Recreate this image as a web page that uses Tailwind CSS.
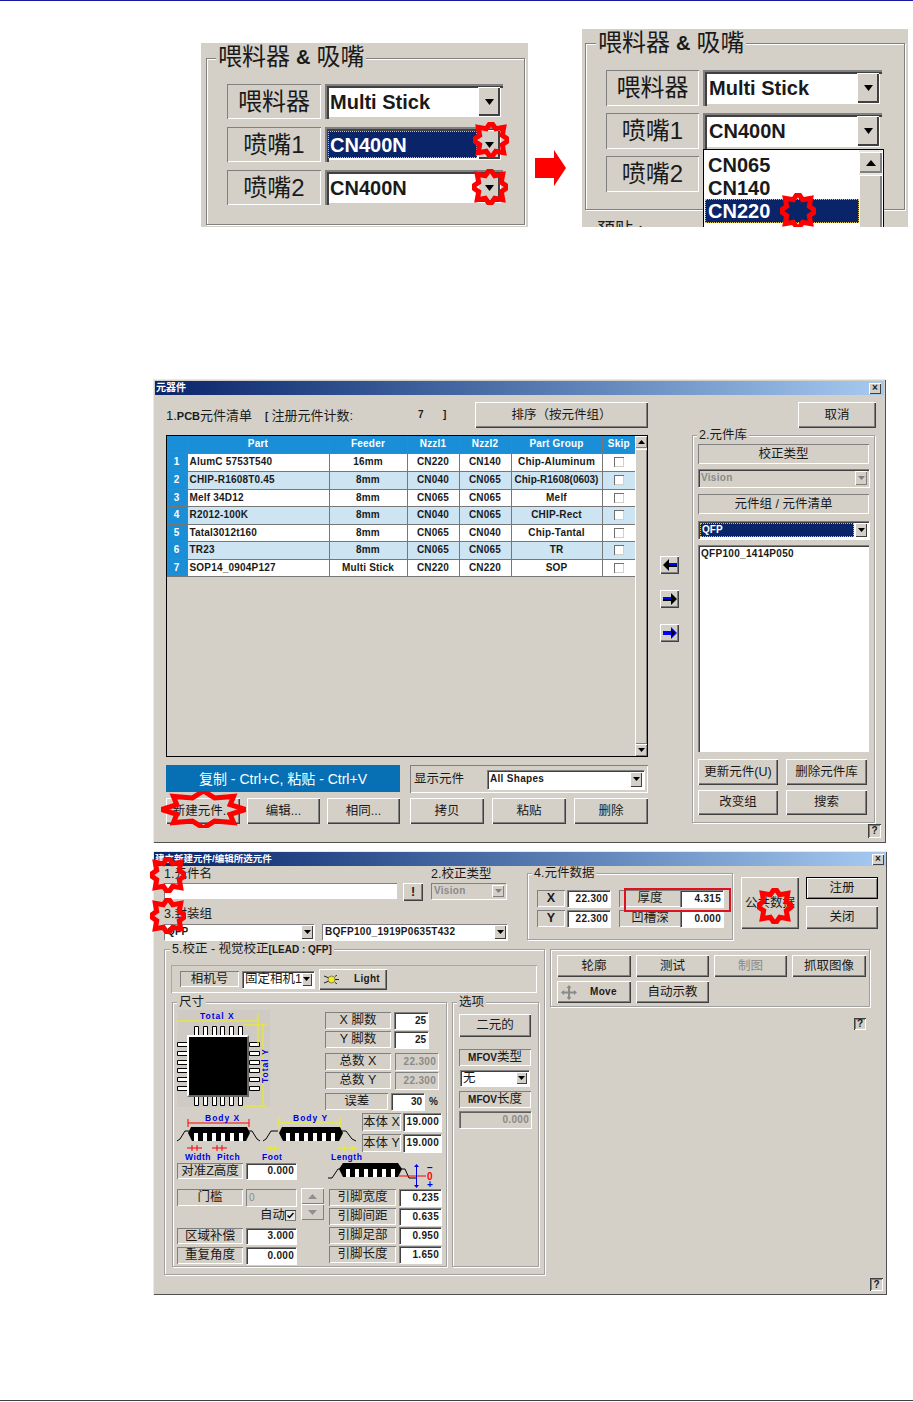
<!DOCTYPE html>
<html lang="zh">
<head>
<meta charset="UTF-8">
<title>元器件</title>
<script src="https://cdn.jsdelivr.net/npm/@tailwindcss/browser@4"></script>
</head>
<body class="bg-white w-[913px] h-[1402px] overflow-hidden text-[#1a1a1a] text-[12.5px] leading-none font-['Liberation_Sans','Noto_Sans_CJK_SC',sans-serif]">

<svg class="hidden"><defs><polygon id="star" points="100,50 81.4,63 85.4,85.4 63,81.4 50,100 37,81.4 14.6,85.4 18.6,63 0,50 18.6,37 14.6,14.6 37,18.6 50,0 63,18.6 85.4,14.6 81.4,37" fill="none" stroke="#f00" stroke-width="5" vector-effect="non-scaling-stroke"/></defs></svg>

<div class="h-px bg-[#1a1aa0]"></div>

<!-- Top: combo before / after -->
<div class="h-[226px] flex items-end pl-[201px]">
  <div class="relative w-[327px] h-[184px] bg-[#d4d0c8] overflow-hidden text-[24px]">
    <div class="absolute left-[5px] top-[15px] w-[319px] h-[167px] border border-[#808080] shadow-[1px_1px_0_#fff,inset_1px_1px_0_#fff]"></div>
    <div class="relative ml-[15px] w-fit px-[2px] bg-[#d4d0c8] h-[28px] flex items-center">喂料器 <span class="mx-[6px] font-bold text-[20px]">&amp;</span> 吸嘴</div>
    <div class="relative mt-[13px] ml-[26px] flex flex-col gap-[8px]">
      <div class="flex gap-[4px]">
        <div class="w-[94px] h-[35px] flex items-center justify-center shadow-[inset_1px_1px_0_#808080,inset_-1px_-1px_0_#fff]">喂料器</div>
        <div class="w-[178px] h-[35px] flex items-center bg-white shadow-[inset_2px_2px_0_#808080,inset_4px_4px_0_#404040,inset_-2px_-2px_0_#d4d0c8]">
          <span class="ml-[5px] font-bold text-[20px] font-['Liberation_Sans',sans-serif]">Multi Stick</span>
          <div class="ml-auto mr-[3px] w-[22px] h-[29px] flex items-center justify-center bg-[#d4d0c8] shadow-[inset_1px_1px_0_#fff,inset_-2px_-2px_0_#404040]"><svg class="w-[9px] h-[6px]" viewBox="0 0 9 6"><path d="M0 0h9L4.500 6z"/></svg></div>
        </div>
      </div>
      <div class="flex gap-[4px]">
        <div class="w-[94px] h-[35px] flex items-center justify-center shadow-[inset_1px_1px_0_#808080,inset_-1px_-1px_0_#fff]">喷嘴1</div>
        <div class="w-[178px] h-[35px] flex items-center bg-white shadow-[inset_2px_2px_0_#808080,inset_4px_4px_0_#404040,inset_-2px_-2px_0_#d4d0c8]">
          <span class="ml-[3px] w-[149px] h-[27px] flex items-center pl-px bg-[#0a246a] border border-dotted border-[#d8c060] text-white font-bold text-[20px] font-['Liberation_Sans',sans-serif]">CN400N</span>
          <div class="ml-auto mr-[3px] w-[22px] h-[29px] flex items-center justify-center bg-[#d4d0c8] shadow-[inset_1px_1px_0_#fff,inset_-2px_-2px_0_#404040]"><svg class="w-[9px] h-[6px]" viewBox="0 0 9 6"><path d="M0 0h9L4.500 6z"/></svg></div>
        </div>
      </div>
      <div class="flex gap-[4px]">
        <div class="w-[94px] h-[35px] flex items-center justify-center shadow-[inset_1px_1px_0_#808080,inset_-1px_-1px_0_#fff]">喷嘴2</div>
        <div class="w-[178px] h-[35px] flex items-center bg-white shadow-[inset_2px_2px_0_#808080,inset_4px_4px_0_#404040,inset_-2px_-2px_0_#d4d0c8]">
          <span class="ml-[5px] font-bold text-[20px] font-['Liberation_Sans',sans-serif]">CN400N</span>
          <div class="ml-auto mr-[3px] w-[22px] h-[29px] flex items-center justify-center bg-[#d4d0c8] shadow-[inset_1px_1px_0_#fff,inset_-2px_-2px_0_#404040]"><svg class="w-[9px] h-[6px]" viewBox="0 0 9 6"><path d="M0 0h9L4.500 6z"/></svg></div>
        </div>
      </div>
    </div>
    <svg class="absolute left-[272px] top-[79px] w-[36px] h-[36px]" viewBox="0 0 100 100"><use href="#star"/></svg>
    <svg class="absolute left-[271px] top-[126px] w-[36px] h-[36px]" viewBox="0 0 100 100"><use href="#star"/></svg>
  </div>

  <svg class="ml-[7px] mb-[41px] w-[31px] h-[36px]" viewBox="0 0 31 36"><path d="M0 8H19V0L31 18 19 36V28H0z" fill="#f00"/></svg>

  <div class="relative ml-[16px] w-[326px] h-[198px] bg-[#d4d0c8] overflow-hidden text-[24px]">
    <div class="absolute left-[3px] top-[14px] w-[320px] h-[167px] border border-[#808080] shadow-[1px_1px_0_#fff,inset_1px_1px_0_#fff]"></div>
    <div class="relative ml-[14px] w-fit px-[2px] bg-[#d4d0c8] h-[27px] flex items-center">喂料器 <span class="mx-[6px] font-bold text-[20px]">&amp;</span> 吸嘴</div>
    <div class="relative mt-[14px] ml-[24px] flex flex-col gap-[7px]">
      <div class="flex gap-[4px]">
        <div class="w-[93px] h-[36px] flex items-center justify-center shadow-[inset_1px_1px_0_#808080,inset_-1px_-1px_0_#fff]">喂料器</div>
        <div class="w-[179px] h-[36px] flex items-center bg-white shadow-[inset_2px_2px_0_#808080,inset_4px_4px_0_#404040,inset_-2px_-2px_0_#d4d0c8]">
          <span class="ml-[6px] font-bold text-[20px] font-['Liberation_Sans',sans-serif]">Multi Stick</span>
          <div class="ml-auto mr-[3px] w-[22px] h-[30px] flex items-center justify-center bg-[#d4d0c8] shadow-[inset_1px_1px_0_#fff,inset_-2px_-2px_0_#404040]"><svg class="w-[9px] h-[6px]" viewBox="0 0 9 6"><path d="M0 0h9L4.500 6z"/></svg></div>
        </div>
      </div>
      <div class="flex gap-[4px]">
        <div class="w-[93px] h-[36px] flex items-center justify-center shadow-[inset_1px_1px_0_#808080,inset_-1px_-1px_0_#fff]">喷嘴1</div>
        <div class="w-[179px] h-[36px] flex items-center bg-white shadow-[inset_2px_2px_0_#808080,inset_4px_4px_0_#404040,inset_-2px_-2px_0_#d4d0c8]">
          <span class="ml-[6px] font-bold text-[20px] font-['Liberation_Sans',sans-serif]">CN400N</span>
          <div class="ml-auto mr-[3px] w-[22px] h-[30px] flex items-center justify-center bg-[#d4d0c8] shadow-[inset_1px_1px_0_#fff,inset_-2px_-2px_0_#404040]"><svg class="w-[9px] h-[6px]" viewBox="0 0 9 6"><path d="M0 0h9L4.500 6z"/></svg></div>
        </div>
      </div>
      <div class="flex gap-[4px]">
        <div class="w-[93px] h-[36px] flex items-center justify-center shadow-[inset_1px_1px_0_#808080,inset_-1px_-1px_0_#fff]">喷嘴2</div>
      </div>
    </div>
    <div class="absolute left-[15px] top-[192px] text-[18px]">预贴 :</div>
    <!-- open list -->
    <div class="absolute left-[121px] top-[120px] w-[181px] h-[90px] bg-white border border-black border-b-0 flex">
      <div class="w-[155px] pt-[3px] pl-px font-bold text-[20px] font-['Liberation_Sans',sans-serif]">
        <div class="h-[23px] flex items-center pl-[3px]">CN065</div>
        <div class="h-[23px] flex items-center pl-[3px]">CN140</div>
        <div class="h-[24px] flex items-center pl-[2px] bg-[#0a246a] border border-dotted border-[#d8c060] text-white">CN220</div>
      </div>
      <div class="w-[23px] bg-[#e8e6e1] flex flex-col">
        <div class="h-[21px] flex items-center justify-center bg-[#d4d0c8] shadow-[inset_1px_1px_0_#fff,inset_-2px_-2px_0_#808080] mt-[2px]"><svg class="w-[10px] h-[6px]" viewBox="0 0 10 6"><path d="M0 6h10L5 0z"/></svg></div>
        <div class="flex-1 mt-[2px] bg-[#d4d0c8] shadow-[inset_1px_1px_0_#fff,inset_-2px_-2px_0_#808080]"></div>
      </div>
    </div>
    <svg class="absolute left-[198px] top-[164px] w-[36px] h-[36px]" viewBox="0 0 100 100"><use href="#star"/></svg>
  </div>
</div>

<!-- Window 1 -->
<div class="relative ml-[153px] mt-[152px] w-[733px] h-[464px] bg-[#d4d0c8] p-[2px] shadow-[inset_1px_1px_0_#ece9e4,inset_-1px_-1px_0_#505050]">
  <div class="h-[14px] flex items-center justify-between pl-[1px] pr-[3px] bg-linear-to-r from-[#0a246a] to-[#a6caf0]">
    <span class="text-white font-bold text-[10px]">元器件</span>
    <div class="w-[12px] h-[11px] flex items-center justify-center bg-[#d4d0c8] text-[10px] font-bold shadow-[inset_1px_1px_0_#fff,inset_-1px_-1px_0_#404040]">×</div>
  </div>
  <div class="pl-[11px] pt-[7px] flex items-center h-[33px]">
    <span class="w-[252px] text-[13px] whitespace-nowrap">1.<span class="font-bold text-[11px]">PCB</span>元件清单<span class="ml-[13px] mr-[3px] font-bold text-[10px]">[</span>注册元件计数:</span>
    <span class="w-[25px] font-bold text-[10px]">7</span>
    <span class="w-[32px] font-bold text-[10px]">]</span>
    <div class="w-[173px] h-[26px] flex items-center justify-center shadow-[inset_1px_1px_0_#fff,inset_-1px_-1px_0_#404040,inset_-2px_-2px_0_#808080]">排序（按元件组）</div>
    <div class="ml-[150px] w-[78px] h-[26px] flex items-center justify-center shadow-[inset_1px_1px_0_#fff,inset_-1px_-1px_0_#404040,inset_-2px_-2px_0_#808080]">取消</div>
  </div>
  <div class="flex pl-[11px] mt-[7px]">
    <div class="w-[482px]">
      <div class="relative w-[482px] h-[322px] border border-black flex">
        <table class="table-fixed border-collapse self-start w-[468px] font-bold text-[10px] tracking-[0.2px]">
          <colgroup><col class="w-[20px]"><col class="w-[142px]"><col class="w-[78px]"><col class="w-[52px]"><col class="w-[52px]"><col class="w-[91px]"><col class="w-[33px]"></colgroup>
          <tr class="h-[17px] bg-[#1a8ed6] text-white text-center">
            <td class="border-r border-b border-[#777]"></td><td class="border-r border-b border-[#777]">Part</td><td class="border-r border-b border-[#777]">Feeder</td><td class="border-r border-b border-[#777]">Nzzl1</td><td class="border-r border-b border-[#777]">Nzzl2</td><td class="border-r border-b border-[#777]">Part Group</td><td class="border-b border-[#777]">Skip</td>
          </tr>
          <tr class="h-[18px] bg-white text-center">
            <td class="bg-[#1a8ed6] text-white border-r border-b border-[#777]">1</td><td class="text-left pl-[2px] border-r border-b border-[#777]">AlumC 5753T540</td><td class="border-r border-b border-[#777]">16mm</td><td class="border-r border-b border-[#777]">CN220</td><td class="border-r border-b border-[#777]">CN140</td><td class="border-r border-b border-[#777]">Chip-Aluminum</td><td class="border-b border-[#777]"><div class="mx-auto w-[10px] h-[10px] bg-white shadow-[inset_1px_1px_0_#707070,inset_-1px_-1px_0_#d4d0c8]"></div></td>
          </tr>
          <tr class="h-[18px] bg-[#cde4f2] text-center">
            <td class="bg-[#1a8ed6] text-white border-r border-b border-[#777]">2</td><td class="text-left pl-[2px] border-r border-b border-[#777]">CHIP-R1608T0.45</td><td class="border-r border-b border-[#777]">8mm</td><td class="border-r border-b border-[#777]">CN040</td><td class="border-r border-b border-[#777]">CN065</td><td class="border-r border-b border-[#777] whitespace-nowrap tracking-normal">Chip-R1608(0603)</td><td class="border-b border-[#777]"><div class="mx-auto w-[10px] h-[10px] bg-white shadow-[inset_1px_1px_0_#707070,inset_-1px_-1px_0_#d4d0c8]"></div></td>
          </tr>
          <tr class="h-[17px] bg-white text-center">
            <td class="bg-[#1a8ed6] text-white border-r border-b border-[#777]">3</td><td class="text-left pl-[2px] border-r border-b border-[#777]">Melf 34D12</td><td class="border-r border-b border-[#777]">8mm</td><td class="border-r border-b border-[#777]">CN065</td><td class="border-r border-b border-[#777]">CN065</td><td class="border-r border-b border-[#777]">Melf</td><td class="border-b border-[#777]"><div class="mx-auto w-[10px] h-[10px] bg-white shadow-[inset_1px_1px_0_#707070,inset_-1px_-1px_0_#d4d0c8]"></div></td>
          </tr>
          <tr class="h-[18px] bg-[#cde4f2] text-center">
            <td class="bg-[#1a8ed6] text-white border-r border-b border-[#777]">4</td><td class="text-left pl-[2px] border-r border-b border-[#777]">R2012-100K</td><td class="border-r border-b border-[#777]">8mm</td><td class="border-r border-b border-[#777]">CN040</td><td class="border-r border-b border-[#777]">CN065</td><td class="border-r border-b border-[#777]">CHIP-Rect</td><td class="border-b border-[#777]"><div class="mx-auto w-[10px] h-[10px] bg-white shadow-[inset_1px_1px_0_#707070,inset_-1px_-1px_0_#d4d0c8]"></div></td>
          </tr>
          <tr class="h-[17px] bg-white text-center">
            <td class="bg-[#1a8ed6] text-white border-r border-b border-[#777]">5</td><td class="text-left pl-[2px] border-r border-b border-[#777]">Tatal3012t160</td><td class="border-r border-b border-[#777]">8mm</td><td class="border-r border-b border-[#777]">CN065</td><td class="border-r border-b border-[#777]">CN040</td><td class="border-r border-b border-[#777]">Chip-Tantal</td><td class="border-b border-[#777]"><div class="mx-auto w-[10px] h-[10px] bg-white shadow-[inset_1px_1px_0_#707070,inset_-1px_-1px_0_#d4d0c8]"></div></td>
          </tr>
          <tr class="h-[18px] bg-[#cde4f2] text-center">
            <td class="bg-[#1a8ed6] text-white border-r border-b border-[#777]">6</td><td class="text-left pl-[2px] border-r border-b border-[#777]">TR23</td><td class="border-r border-b border-[#777]">8mm</td><td class="border-r border-b border-[#777]">CN065</td><td class="border-r border-b border-[#777]">CN065</td><td class="border-r border-b border-[#777]">TR</td><td class="border-b border-[#777]"><div class="mx-auto w-[10px] h-[10px] bg-white shadow-[inset_1px_1px_0_#707070,inset_-1px_-1px_0_#d4d0c8]"></div></td>
          </tr>
          <tr class="h-[17px] bg-white text-center">
            <td class="bg-[#1a8ed6] text-white border-r border-b border-[#777]">7</td><td class="text-left pl-[2px] border-r border-b border-[#777]">SOP14_0904P127</td><td class="border-r border-b border-[#777]">Multi Stick</td><td class="border-r border-b border-[#777]">CN220</td><td class="border-r border-b border-[#777]">CN220</td><td class="border-r border-b border-[#777]">SOP</td><td class="border-b border-[#777]"><div class="mx-auto w-[10px] h-[10px] bg-white shadow-[inset_1px_1px_0_#707070,inset_-1px_-1px_0_#d4d0c8]"></div></td>
          </tr>
        </table>
        <div class="ml-auto w-[12px] flex flex-col bg-[#ebe9e4]">
          <div class="h-[12px] flex items-center justify-center bg-[#d4d0c8] shadow-[inset_1px_1px_0_#fff,inset_-1px_-1px_0_#808080]"><svg class="w-[7px] h-[4px]" viewBox="0 0 7 4"><path d="M0 4h7L3.500 0z"/></svg></div>
          <div class="flex-1 mt-px bg-[#d4d0c8] shadow-[inset_1px_1px_0_#fff,inset_-1px_-1px_0_#808080]"></div>
          <div class="h-[12px] flex items-center justify-center bg-[#d4d0c8] shadow-[inset_1px_1px_0_#fff,inset_-1px_-1px_0_#808080]"><svg class="w-[7px] h-[4px]" viewBox="0 0 7 4"><path d="M0 0h7L3.500 4z"/></svg></div>
        </div>
      </div>
      <div class="flex mt-[8px]">
        <div class="w-[234px] h-[27px] bg-[#0770b5] text-white text-[14px] flex items-center justify-center">复制 - Ctrl+C, 粘贴 - Ctrl+V</div>
        <div class="ml-[10px] w-[238px] h-[28px] flex items-center pl-[4px] shadow-[inset_1px_1px_0_#808080,inset_-1px_-1px_0_#fff]">
          <span class="w-[73px]">显示元件</span>
          <div class="w-[157px] h-[19px] flex items-center bg-white shadow-[inset_1px_1px_0_#808080,inset_2px_2px_0_#404040,1px_1px_0_#fff]">
            <span class="ml-[3px] font-bold text-[10px] tracking-[0.3px]">All Shapes</span>
            <div class="ml-auto mr-[2px] w-[12px] h-[15px] flex items-center justify-center bg-[#d4d0c8] shadow-[inset_1px_1px_0_#fff,inset_-1px_-1px_0_#404040]"><svg class="w-[7px] h-[4px]" viewBox="0 0 7 4"><path d="M0 0h7L3.500 4z"/></svg></div>
          </div>
        </div>
      </div>
      <div class="flex mt-[5px] h-[26px]">
        <div class="relative w-[74px] flex items-center justify-center shadow-[inset_1px_1px_0_#fff,inset_-1px_-1px_0_#404040,inset_-2px_-2px_0_#808080]">新建元件...
          <svg class="absolute -left-[5px] -top-[7px] w-[85px] h-[37px]" viewBox="0 0 100 100" preserveAspectRatio="none"><use href="#star"/></svg>
        </div>
        <div class="ml-[7px] w-[73px] flex items-center justify-center shadow-[inset_1px_1px_0_#fff,inset_-1px_-1px_0_#404040,inset_-2px_-2px_0_#808080]">编辑...</div>
        <div class="ml-[7px] w-[73px] flex items-center justify-center shadow-[inset_1px_1px_0_#fff,inset_-1px_-1px_0_#404040,inset_-2px_-2px_0_#808080]">相同...</div>
        <div class="ml-[10px] w-[74px] flex items-center justify-center shadow-[inset_1px_1px_0_#fff,inset_-1px_-1px_0_#404040,inset_-2px_-2px_0_#808080]">拷贝</div>
        <div class="ml-[8px] w-[74px] flex items-center justify-center shadow-[inset_1px_1px_0_#fff,inset_-1px_-1px_0_#404040,inset_-2px_-2px_0_#808080]">粘贴</div>
        <div class="ml-[8px] w-[74px] flex items-center justify-center shadow-[inset_1px_1px_0_#fff,inset_-1px_-1px_0_#404040,inset_-2px_-2px_0_#808080]">删除</div>
      </div>
    </div>

    <div class="ml-[12px] w-[19px] pt-[121px] flex flex-col gap-[16px]">
      <div class="h-[18px] flex items-center justify-center bg-[#d4d0c8] shadow-[inset_1px_1px_0_#fff,inset_-1px_-1px_0_#404040,inset_-2px_-2px_0_#808080]"><svg class="w-[14px] h-[12px]" viewBox="0 0 14 12"><path d="M0 6 6 0V12z"/><path d="M6 4H14V6H6z" fill="#00f"/><path d="M6 6H14V8H6z"/></svg></div>
      <div class="h-[18px] flex items-center justify-center bg-[#d4d0c8] shadow-[inset_1px_1px_0_#fff,inset_-1px_-1px_0_#404040,inset_-2px_-2px_0_#808080]"><svg class="w-[14px] h-[12px]" viewBox="0 0 14 12"><path d="M14 6 8 0V12z"/><path d="M0 4H8V6H0z" fill="#00f"/><path d="M0 6H8V8H0z"/></svg></div>
      <div class="h-[18px] flex items-center justify-center bg-[#d4d0c8] shadow-[inset_1px_1px_0_#fff,inset_-1px_-1px_0_#404040,inset_-2px_-2px_0_#808080]"><svg class="w-[14px] h-[12px]" viewBox="0 0 14 12"><path d="M14 6 8 0V12z" fill="#00f"/><path d="M0 4H8V8H0z" fill="#00f"/><path d="M8 2 12 6 8 10z"/></svg></div>
    </div>

    <div class="relative ml-[13px] w-[183px] h-[388px] border border-[#a0a0a0] shadow-[1px_1px_0_#fff,inset_1px_1px_0_#fff] px-[5px] pt-[8px]">
      <div class="absolute left-[4px] -top-[7px] px-[2px] bg-[#d4d0c8]">2.元件库</div>
      <div class="h-[20px] flex items-center justify-center shadow-[inset_1px_1px_0_#808080,inset_-1px_-1px_0_#fff]">校正类型</div>
      <div class="mt-[5px] h-[18px] flex items-center bg-[#d4d0c8] shadow-[inset_1px_1px_0_#808080,inset_2px_2px_0_#404040,1px_1px_0_#fff]">
        <span class="ml-[3px] font-bold text-[10px] tracking-[0.3px] text-[#8a8a8a]">Vision</span>
        <div class="ml-auto mr-[2px] w-[12px] h-[14px] flex items-center justify-center shadow-[inset_1px_1px_0_#fff,inset_-1px_-1px_0_#808080]"><svg class="w-[7px] h-[4px]" viewBox="0 0 7 4"><path d="M0 0h7L3.500 4z" fill="#808080"/></svg></div>
      </div>
      <div class="mt-[7px] h-[20px] flex items-center justify-center shadow-[inset_1px_1px_0_#808080,inset_-1px_-1px_0_#fff]">元件组 / 元件清单</div>
      <div class="mt-[7px] h-[18px] flex items-center bg-white shadow-[inset_1px_1px_0_#808080,inset_2px_2px_0_#404040,1px_1px_0_#fff]">
        <span class="ml-[2px] w-[154px] h-[14px] flex items-center pl-px bg-[#0a246a] border border-dotted border-[#d8c060] text-white font-bold text-[10px]">QFP</span>
        <div class="ml-auto mr-[2px] w-[12px] h-[14px] flex items-center justify-center bg-[#d4d0c8] shadow-[inset_1px_1px_0_#fff,inset_-1px_-1px_0_#404040]"><svg class="w-[7px] h-[4px]" viewBox="0 0 7 4"><path d="M0 0h7L3.500 4z"/></svg></div>
      </div>
      <div class="mt-[6px] h-[207px] bg-white pl-[3px] pt-[4px] font-bold text-[10px] tracking-[0.3px] shadow-[inset_1px_1px_0_#808080,inset_2px_2px_0_#404040]">QFP100_1414P050</div>
      <div class="mt-[7px] grid grid-cols-[80px_81px] gap-x-[8px] gap-y-[5px]">
        <div class="h-[26px] flex items-center justify-center shadow-[inset_1px_1px_0_#fff,inset_-1px_-1px_0_#404040,inset_-2px_-2px_0_#808080]">更新元件(U)</div>
        <div class="h-[26px] flex items-center justify-center shadow-[inset_1px_1px_0_#fff,inset_-1px_-1px_0_#404040,inset_-2px_-2px_0_#808080]">删除元件库</div>
        <div class="h-[25px] flex items-center justify-center shadow-[inset_1px_1px_0_#fff,inset_-1px_-1px_0_#404040,inset_-2px_-2px_0_#808080]">改变组</div>
        <div class="h-[25px] flex items-center justify-center shadow-[inset_1px_1px_0_#fff,inset_-1px_-1px_0_#404040,inset_-2px_-2px_0_#808080]">搜索</div>
      </div>
    </div>
  </div>
  <div class="flex justify-end pr-[3px]">
    <div class="w-[13px] h-[14px] flex items-center justify-center font-bold text-[10px] shadow-[inset_1px_1px_0_#404040,inset_-1px_-1px_0_#fff,inset_2px_2px_0_#808080]">?</div>
  </div>
</div>

<!-- Window 2 -->
<div class="relative ml-[153px] mt-[8px] w-[734px] h-[444px] bg-[#d4d0c8] shadow-[inset_1px_1px_0_#ece9e4,inset_-1px_-1px_0_#505050] p-[1px]">
  <div class="h-[14px] flex items-center justify-between pl-[1px] pr-[2px] bg-linear-to-r from-[#0a246a] to-[#a6caf0]">
    <span class="text-white font-bold text-[9.5px]">建立新建元件/编辑所选元件</span>
    <div class="w-[12px] h-[11px] flex items-center justify-center bg-[#d4d0c8] text-[10px] font-bold shadow-[inset_1px_1px_0_#fff,inset_-1px_-1px_0_#404040]">×</div>
  </div>

  <div class="flex pl-[10px]">
    <div class="w-[343px] shrink-0 relative">
      <div class="h-[17px] flex items-end pb-[3px]">
        <span class="w-[267px]">1.元件名</span><span>2.校正类型</span>
      </div>
      <div class="flex h-[16px]">
        <div class="w-[233px] bg-white shadow-[inset_1px_1px_0_#808080]"></div>
        <div class="ml-[6px] w-[20px] h-[18px] flex items-center justify-center font-bold shadow-[inset_1px_1px_0_#fff,inset_-1px_-1px_0_#404040,inset_-2px_-2px_0_#808080]">!</div>
        <div class="ml-[8px] w-[75px] flex items-center shadow-[inset_1px_1px_0_#808080,1px_1px_0_#fff]">
          <span class="ml-[3px] font-bold text-[10px] tracking-[0.3px] text-[#8a8a8a]">Vision</span>
          <div class="ml-auto mr-[2px] w-[12px] h-[12px] flex items-center justify-center shadow-[inset_1px_1px_0_#fff,inset_-1px_-1px_0_#808080]"><svg class="w-[7px] h-[4px]" viewBox="0 0 7 4"><path d="M0 0h7L3.500 4z" fill="#808080"/></svg></div>
        </div>
      </div>
      <div class="h-[25px] flex items-end pb-[4px]">3.封装组</div>
      <div class="flex h-[16px]">
        <div class="w-[150px] flex items-center bg-white shadow-[inset_1px_1px_0_#808080,1px_1px_0_#fff]">
          <span class="ml-[3px] font-bold text-[10px] tracking-[0.3px]">QFP</span>
          <div class="ml-auto mr-px w-[12px] h-[14px] flex items-center justify-center bg-[#d4d0c8] shadow-[inset_1px_1px_0_#fff,inset_-1px_-1px_0_#404040]"><svg class="w-[7px] h-[4px]" viewBox="0 0 7 4"><path d="M0 0h7L3.500 4z"/></svg></div>
        </div>
        <div class="ml-[8px] w-[185px] flex items-center bg-white shadow-[inset_1px_1px_0_#808080,1px_1px_0_#fff]">
          <span class="ml-[3px] font-bold text-[10px] tracking-[0.3px]">BQFP100_1919P0635T432</span>
          <div class="ml-auto mr-px w-[12px] h-[14px] flex items-center justify-center bg-[#d4d0c8] shadow-[inset_1px_1px_0_#fff,inset_-1px_-1px_0_#404040]"><svg class="w-[7px] h-[4px]" viewBox="0 0 7 4"><path d="M0 0h7L3.500 4z"/></svg></div>
        </div>
      </div>
      <svg class="absolute -left-[14px] -top-[9px] w-[36px] h-[36px]" viewBox="0 0 100 100"><use href="#star"/></svg>
      <svg class="absolute -left-[14px] top-[32px] w-[36px] h-[36px]" viewBox="0 0 100 100"><use href="#star"/></svg>
    </div>

    <div class="relative ml-[20px] mt-[7px] w-[206px] h-[67px] border border-[#a0a0a0] shadow-[1px_1px_0_#fff,inset_1px_1px_0_#fff] shrink-0 pt-[16px] pl-[9px]">
      <div class="absolute left-[4px] -top-[7px] px-[2px] bg-[#d4d0c8]">4.元件数据</div>
      <div class="grid grid-cols-[28px_43px_62px_43px] gap-y-[3px] h-[37px]">
        <div class="flex items-center justify-center font-bold shadow-[inset_1px_1px_0_#808080,inset_-1px_-1px_0_#fff]">X</div>
        <div class="ml-[2px] w-[43px] flex items-center justify-end pr-[2px] font-bold text-[10px] tracking-[0.3px] bg-white shadow-[inset_1px_1px_0_#808080,inset_2px_2px_0_#404040,1px_1px_0_#fff]">22.300</div>
        <div class="ml-[11px] w-[62px] flex items-center justify-center shadow-[inset_1px_1px_0_#808080,inset_-1px_-1px_0_#fff]">厚度</div>
        <div class="ml-[10px] w-[43px] flex items-center justify-end pr-[2px] font-bold text-[10px] tracking-[0.3px] bg-white shadow-[inset_1px_1px_0_#808080,inset_2px_2px_0_#404040,1px_1px_0_#fff]">4.315</div>
        <div class="flex items-center justify-center font-bold shadow-[inset_1px_1px_0_#808080,inset_-1px_-1px_0_#fff]">Y</div>
        <div class="ml-[2px] w-[43px] flex items-center justify-end pr-[2px] font-bold text-[10px] tracking-[0.3px] bg-white shadow-[inset_1px_1px_0_#808080,inset_2px_2px_0_#404040,1px_1px_0_#fff]">22.300</div>
        <div class="ml-[11px] w-[62px] flex items-center justify-center shadow-[inset_1px_1px_0_#808080,inset_-1px_-1px_0_#fff]">凹槽深</div>
        <div class="ml-[10px] w-[43px] flex items-center justify-end pr-[2px] font-bold text-[10px] tracking-[0.3px] bg-white shadow-[inset_1px_1px_0_#808080,inset_2px_2px_0_#404040,1px_1px_0_#fff]">0.000</div>
      </div>
      <div class="absolute left-[96px] top-[14px] w-[107px] h-[24px] border-2 border-[#e01020]"></div>
    </div>

    <div class="relative ml-[8px] mt-[11px] w-[58px] h-[52px] shrink-0 flex items-center justify-center whitespace-nowrap shadow-[inset_1px_1px_0_#fff,inset_-1px_-1px_0_#404040,inset_-2px_-2px_0_#808080]">公共数据
      <svg class="absolute left-[16px] top-[11px] w-[36px] h-[36px]" viewBox="0 0 100 100"><use href="#star"/></svg>
    </div>
    <div class="ml-[7px] mt-[11px] w-[72px] shrink-0 flex flex-col gap-[7px]">
      <div class="h-[22px] flex items-center justify-center border border-black shadow-[inset_1px_1px_0_#fff,inset_-1px_-1px_0_#808080]">注册</div>
      <div class="h-[23px] flex items-center justify-center shadow-[inset_1px_1px_0_#fff,inset_-1px_-1px_0_#404040,inset_-2px_-2px_0_#808080]">关闭</div>
    </div>
  </div>

  <div class="flex pl-[10px] mt-[9px]">
    <!-- Group 5 -->
    <div class="relative w-[381px] h-[326px] border border-[#a0a0a0] shadow-[1px_1px_0_#fff,inset_1px_1px_0_#fff] shrink-0 pl-[6px] pt-[15px]">
      <div class="absolute left-[5px] -top-[7px] px-[2px] bg-[#d4d0c8]">5.校正 - 视觉校正<span class="font-bold text-[10px]">[LEAD : QFP]</span></div>
      <div class="w-[366px] h-[28px] flex items-center pl-[9px] shadow-[inset_1px_1px_0_#a8a8a8,inset_-1px_-1px_0_#fff]">
        <div class="w-[59px] h-[16px] flex items-center justify-center shadow-[inset_1px_1px_0_#808080,inset_-1px_-1px_0_#fff]">相机号</div>
        <div class="ml-[3px] w-[72px] h-[17px] flex items-center bg-white shadow-[inset_1px_1px_0_#808080,inset_2px_2px_0_#404040,1px_1px_0_#fff]">
          <span class="ml-[3px] whitespace-nowrap">固定相机1</span>
          <div class="ml-auto mr-[2px] w-[12px] h-[13px] flex items-center justify-center bg-[#d4d0c8] shadow-[inset_1px_1px_0_#fff,inset_-1px_-1px_0_#404040]"><svg class="w-[7px] h-[4px]" viewBox="0 0 7 4"><path d="M0 0h7L3.500 4z"/></svg></div>
        </div>
        <div class="ml-[5px] w-[68px] h-[21px] flex items-center pl-[5px] font-bold text-[10px] tracking-[0.3px] shadow-[inset_1px_1px_0_#fff,inset_-1px_-1px_0_#404040,inset_-2px_-2px_0_#808080]">
          <svg class="w-[15px] h-[9px]" viewBox="0 0 15 9"><path d="M0 1 5 3M0 8 5 6M11 1.500 13 0M11 7.500 13 9M11 4.500H15" stroke="#222" stroke-width="1"/><circle cx="7.500" cy="4.500" r="3.500" fill="#f4ee10" stroke="#555" stroke-width=".7"/></svg>
          <span class="ml-[15px]">Light</span>
        </div>
      </div>
      <div class="flex mt-[9px] ml-px">
        <!-- Size group -->
        <div class="relative w-[275px] h-[265px] border border-[#a0a0a0] shadow-[1px_1px_0_#fff,inset_1px_1px_0_#fff] pl-[4px] pt-[7px]">
          <div class="absolute left-[4px] -top-[7px] px-[2px] bg-[#d4d0c8]">尺寸</div>
          <div class="flex">
            <svg class="w-[93px] h-[97px] bg-[#cfcbc4]" viewBox="0 0 93 97">
              <g fill="#fff" stroke="#000" stroke-width="1">
                <path d="M17.500 16.500h4v9h-4zM26.500 16.500h4v9h-4zM35.500 16.500h4v9h-4zM43.500 16.500h4v9h-4zM52.500 16.500h4v9h-4zM61.500 16.500h4v9h-4z"/>
                <path d="M17.500 86.500h4v9h-4zM26.500 86.500h4v9h-4zM35.500 86.500h4v9h-4zM43.500 86.500h4v9h-4zM52.500 86.500h4v9h-4zM61.500 86.500h4v9h-4z"/>
                <path d="M.5 32.500h10v4H.5zM.5 41.500h10v4H.5zM.5 50.500h10v4H.5zM.5 58.500h10v4H.5zM.5 67.500h10v4H.5zM.5 76.500h10v4H.5z"/>
                <path d="M72.500 32.500h10v4h-10zM72.500 41.500h10v4h-10zM72.500 50.500h10v4h-10zM72.500 58.500h10v4h-10zM72.500 67.500h10v4h-10zM72.500 76.500h10v4h-10z"/>
              </g>
              <rect x="10" y="25" width="62" height="62" fill="#666"/>
              <path d="M10 25H72L70 27H12V85L10 87z" fill="#fff"/>
              <rect x="12" y="27" width="58" height="58"/>
              <g stroke="#f2f200" stroke-width="1" fill="none">
                <path d="M0 11H81M0 3V20M81 3V36M66 15H90M66 96H90M86 15V96"/>
              </g>
              <text x="23" y="9" fill="#0000e0" font-size="8.500" font-weight="700" letter-spacing="1">Total X</text>
              <text transform="translate(91 73) rotate(-90)" fill="#0000e0" font-size="8.500" font-weight="700" letter-spacing="1">Total Y</text>
            </svg>
            <div class="ml-[55px] flex flex-col w-[113px] pt-[2px]">
              <div class="flex h-[17px]"><div class="w-[66px] flex items-center justify-center shadow-[inset_1px_1px_0_#808080,inset_-1px_-1px_0_#fff]">X 脚数</div><div class="ml-[3px] w-[34px] flex items-center justify-end pr-[2px] font-bold text-[10px] bg-white shadow-[inset_1px_1px_0_#808080,inset_2px_2px_0_#404040,1px_1px_0_#fff]">25</div></div>
              <div class="flex h-[17px] mt-[2px]"><div class="w-[66px] flex items-center justify-center shadow-[inset_1px_1px_0_#808080,inset_-1px_-1px_0_#fff]">Y 脚数</div><div class="ml-[3px] w-[34px] flex items-center justify-end pr-[2px] font-bold text-[10px] bg-white shadow-[inset_1px_1px_0_#808080,inset_2px_2px_0_#404040,1px_1px_0_#fff]">25</div></div>
              <div class="flex h-[17px] mt-[5px]"><div class="w-[66px] flex items-center justify-center shadow-[inset_1px_1px_0_#808080,inset_-1px_-1px_0_#fff]">总数 X</div><div class="ml-[4px] w-[43px] flex items-center justify-end pr-[2px] font-bold text-[10px] tracking-[0.3px] text-[#8a8a8a] shadow-[inset_1px_1px_0_#808080,1px_1px_0_#fff]">22.300</div></div>
              <div class="flex h-[17px] mt-[2px]"><div class="w-[66px] flex items-center justify-center shadow-[inset_1px_1px_0_#808080,inset_-1px_-1px_0_#fff]">总数 Y</div><div class="ml-[4px] w-[43px] flex items-center justify-end pr-[2px] font-bold text-[10px] tracking-[0.3px] text-[#8a8a8a] shadow-[inset_1px_1px_0_#808080,1px_1px_0_#fff]">22.300</div></div>
              <div class="flex h-[17px] mt-[4px]"><div class="w-[66px] flex items-center justify-center shadow-[inset_1px_1px_0_#808080,inset_-1px_-1px_0_#fff]">误差</div><div class="ml-[3px] w-[34px] flex items-center justify-end pr-[2px] font-bold text-[10px] bg-white shadow-[inset_1px_1px_0_#808080,inset_2px_2px_0_#404040,1px_1px_0_#fff]">30</div><span class="ml-[5px] self-center font-bold text-[10px]">%</span></div>
            </div>
          </div>
          <div class="flex mt-[3px]">
            <svg class="w-[84px] h-[49px]" viewBox="0 0 84 49">
              <path d="M0 28 3 26 8 18H12M71 18H75L80 26 83 28" fill="none" stroke="#000"/>
              <path d="M14 14H70L73 20 69 28H15L11 20z"/>
              <path d="M17 20h4v8h-4zM26 20h4v8h-4zM35 20h4v8h-4zM44 20h4v8h-4zM53 20h4v8h-4zM62 20h4v8h-4z" fill="#fff"/>
              <path d="M11 10H72M11 6V14M72 6V14" stroke="#f00"/>
              <text x="28" y="8" fill="#0000e0" font-size="8.500" font-weight="700" letter-spacing="1">Body X</text>
              <path d="M10 35H25M15 32V38M20 32V38M35 35H50M40 32V38M45 32V38" stroke="#f00"/>
              <text x="8" y="47" fill="#0000e0" font-size="8.500" font-weight="700" letter-spacing=".5">Width</text>
              <text x="40" y="47" fill="#0000e0" font-size="8.500" font-weight="700" letter-spacing=".5">Pitch</text>
            </svg>
            <svg class="ml-[1px] w-[101px] h-[49px]" viewBox="0 0 101 49">
              <path d="M1 28 4 26 9 18H16M79 18H84L90 26 94 28" fill="none" stroke="#000"/>
              <path d="M20 14H78L81 20 77 28H21L17 20z"/>
              <path d="M24 20h4v8h-4zM33 20h4v8h-4zM42 20h4v8h-4zM51 20h4v8h-4zM60 20h4v8h-4zM69 20h4v8h-4z" fill="#fff"/>
              <path d="M17 10H78M17 4V14M78 4V14" stroke="#f2f200"/>
              <text x="31" y="8" fill="#0000e0" font-size="8.500" font-weight="700" letter-spacing="1">Body Y</text>
              <path d="M4 35H17M8 32V38M13 32V38M75 35H95M82 32V38M90 32V38" stroke="#f2f200"/>
              <text x="0" y="47" fill="#0000e0" font-size="8.500" font-weight="700" letter-spacing=".5">Foot</text>
              <text x="69" y="47" fill="#0000e0" font-size="8.500" font-weight="700" letter-spacing=".5">Length</text>
            </svg>
            <div class="-ml-[1px] flex flex-col gap-[3px]">
              <div class="flex h-[18px]"><div class="w-[39px] flex items-center justify-center whitespace-nowrap shadow-[inset_1px_1px_0_#808080,inset_-1px_-1px_0_#fff]">本体 X</div><div class="ml-[2px] w-[38px] flex items-center justify-end pr-[2px] font-bold text-[10px] tracking-[0.3px] bg-white shadow-[inset_1px_1px_0_#808080,inset_2px_2px_0_#404040,1px_1px_0_#fff]">19.000</div></div>
              <div class="flex h-[18px]"><div class="w-[39px] flex items-center justify-center whitespace-nowrap shadow-[inset_1px_1px_0_#808080,inset_-1px_-1px_0_#fff]">本体 Y</div><div class="ml-[2px] w-[38px] flex items-center justify-end pr-[2px] font-bold text-[10px] tracking-[0.3px] bg-white shadow-[inset_1px_1px_0_#808080,inset_2px_2px_0_#404040,1px_1px_0_#fff]">19.000</div></div>
            </div>
          </div>
          <div class="flex mt-[1px]">
            <div class="w-[147px]">
              <div class="flex h-[16px]"><div class="w-[66px] flex items-center justify-center shadow-[inset_1px_1px_0_#808080,inset_-1px_-1px_0_#fff]">对准Z高度</div><div class="ml-[3px] w-[50px] flex items-center justify-end pr-[2px] font-bold text-[10px] tracking-[0.3px] bg-white shadow-[inset_1px_1px_0_#808080,inset_2px_2px_0_#404040,1px_1px_0_#fff]">0.000</div></div>
              <div class="flex mt-[10px]">
                <div class="w-[119px]">
                  <div class="flex h-[17px]"><div class="w-[66px] flex items-center justify-center shadow-[inset_1px_1px_0_#808080,inset_-1px_-1px_0_#fff]">门槛</div><div class="ml-[3px] w-[50px] flex items-center pl-[3px] text-[10px] text-[#8a8a8a] shadow-[inset_1px_1px_0_#808080,1px_1px_0_#fff]">0</div></div>
                  <div class="flex justify-end items-center mt-[3px] h-[12px]">自动<div class="w-[11px] h-[11px] flex items-center justify-center bg-[#e8e8e8] shadow-[inset_1px_1px_0_#404040,inset_-1px_-1px_0_#808080]"><svg class="w-[7px] h-[7px]" viewBox="0 0 7 7"><path d="M0.500 3.500 2.500 5.500 6.500 1" fill="none" stroke="#000" stroke-width="1.500"/></svg></div></div>
                </div>
                <div class="ml-[5px] -mt-px w-[23px] flex flex-col">
                  <div class="h-[16px] flex items-center justify-center shadow-[inset_1px_1px_0_#fff,inset_-1px_-1px_0_#808080]"><svg class="w-[9px] h-[5px]" viewBox="0 0 9 5"><path d="M0 5h9L4.500 0z" fill="#909090"/></svg></div>
                  <div class="h-[16px] flex items-center justify-center shadow-[inset_1px_1px_0_#fff,inset_-1px_-1px_0_#808080]"><svg class="w-[9px] h-[5px]" viewBox="0 0 9 5"><path d="M0 0h9L4.500 5z" fill="#909090"/></svg></div>
                </div>
              </div>
              <div class="flex h-[16px] mt-[7px]"><div class="w-[66px] flex items-center justify-center shadow-[inset_1px_1px_0_#808080,inset_-1px_-1px_0_#fff]">区域补偿</div><div class="ml-[3px] w-[50px] flex items-center justify-end pr-[2px] font-bold text-[10px] tracking-[0.3px] bg-white shadow-[inset_1px_1px_0_#808080,inset_2px_2px_0_#404040,1px_1px_0_#fff]">3.000</div></div>
              <div class="flex h-[17px] mt-[3px]"><div class="w-[66px] flex items-center justify-center shadow-[inset_1px_1px_0_#808080,inset_-1px_-1px_0_#fff]">重复角度</div><div class="ml-[3px] w-[50px] flex items-center justify-end pr-[2px] font-bold text-[10px] tracking-[0.3px] bg-white shadow-[inset_1px_1px_0_#808080,inset_2px_2px_0_#404040,1px_1px_0_#fff]">0.000</div></div>
            </div>
            <div class="ml-[5px] w-[113px]">
              <svg class="block w-[113px] h-[26px] -ml-[1px]" viewBox="0 0 113 26">
                <path d="M0 15H4L10 6H14M72 6H77L81 15H88" fill="none" stroke="#000"/>
                <path d="M15 0H70L74 6 70 14H15L11 6z"/>
                <path d="M18 6h4v8h-4zM27 6h4v8h-4zM36 6h4v8h-4zM45 6h4v8h-4zM54 6h4v8h-4zM63 6h4v8h-4z" fill="#fff"/>
                <path d="M71 13H98" stroke="#f00"/>
                <path d="M88.500 2V24" stroke="#0000e0"/><path d="M86 4h5l-2.500-3zM86 22h5l-2.500 3z" fill="#0000e0"/>
                <text x="99" y="8" fill="#0000e0" font-size="10" font-weight="700">−</text>
                <text x="99" y="17" fill="#f00" font-size="10" font-weight="700">0</text>
                <text x="99" y="25" fill="#0000e0" font-size="10" font-weight="700">+</text>
              </svg>
              <div class="flex flex-col gap-[2px]">
                <div class="flex h-[17px]"><div class="w-[67px] flex items-center justify-center shadow-[inset_1px_1px_0_#808080,inset_-1px_-1px_0_#fff]">引脚宽度</div><div class="ml-[3px] w-[42px] flex items-center justify-end pr-[2px] font-bold text-[10px] tracking-[0.3px] bg-white shadow-[inset_1px_1px_0_#808080,inset_2px_2px_0_#404040,1px_1px_0_#fff]">0.235</div></div>
                <div class="flex h-[17px]"><div class="w-[67px] flex items-center justify-center shadow-[inset_1px_1px_0_#808080,inset_-1px_-1px_0_#fff]">引脚间距</div><div class="ml-[3px] w-[42px] flex items-center justify-end pr-[2px] font-bold text-[10px] tracking-[0.3px] bg-white shadow-[inset_1px_1px_0_#808080,inset_2px_2px_0_#404040,1px_1px_0_#fff]">0.635</div></div>
                <div class="flex h-[17px]"><div class="w-[67px] flex items-center justify-center shadow-[inset_1px_1px_0_#808080,inset_-1px_-1px_0_#fff]">引脚足部</div><div class="ml-[3px] w-[42px] flex items-center justify-end pr-[2px] font-bold text-[10px] tracking-[0.3px] bg-white shadow-[inset_1px_1px_0_#808080,inset_2px_2px_0_#404040,1px_1px_0_#fff]">0.950</div></div>
                <div class="flex h-[17px]"><div class="w-[67px] flex items-center justify-center shadow-[inset_1px_1px_0_#808080,inset_-1px_-1px_0_#fff]">引脚长度</div><div class="ml-[3px] w-[42px] flex items-center justify-end pr-[2px] font-bold text-[10px] tracking-[0.3px] bg-white shadow-[inset_1px_1px_0_#808080,inset_2px_2px_0_#404040,1px_1px_0_#fff]">1.650</div></div>
              </div>
            </div>
          </div>
        </div>
        <!-- Options -->
        <div class="relative ml-[5px] w-[87px] h-[265px] border border-[#a0a0a0] shadow-[1px_1px_0_#fff,inset_1px_1px_0_#fff] pl-[6px] pt-[11px]">
          <div class="absolute left-[4px] -top-[7px] px-[2px] bg-[#d4d0c8]">选项</div>
          <div class="w-[72px] h-[23px] flex items-center justify-center shadow-[inset_1px_1px_0_#fff,inset_-1px_-1px_0_#404040,inset_-2px_-2px_0_#808080]">二元的</div>
          <div class="mt-[12px] w-[72px] h-[17px] flex items-center justify-center shadow-[inset_1px_1px_0_#808080,inset_-1px_-1px_0_#fff]"><span class="font-bold text-[10px]">MFOV</span>类型</div>
          <div class="mt-[4px] ml-px w-[69px] h-[16px] flex items-center bg-white shadow-[inset_1px_1px_0_#808080,inset_2px_2px_0_#404040,1px_1px_0_#fff]">
            <span class="ml-[3px]">无</span>
            <div class="ml-auto mr-[2px] w-[11px] h-[12px] flex items-center justify-center bg-[#d4d0c8] shadow-[inset_1px_1px_0_#fff,inset_-1px_-1px_0_#404040]"><svg class="w-[7px] h-[4px]" viewBox="0 0 7 4"><path d="M0 0h7L3.500 4z"/></svg></div>
          </div>
          <div class="mt-[5px] w-[72px] h-[17px] flex items-center justify-center shadow-[inset_1px_1px_0_#808080,inset_-1px_-1px_0_#fff]"><span class="font-bold text-[10px]">MFOV</span>长度</div>
          <div class="mt-[3px] w-[72px] h-[17px] flex items-center justify-end pr-[2px] font-bold text-[10px] tracking-[0.3px] text-[#8a8a8a] shadow-[inset_1px_1px_0_#808080,inset_2px_2px_0_#606060,1px_1px_0_#fff]">0.000</div>
        </div>
      </div>
    </div>

    <!-- Right buttons -->
    <div class="ml-[5px] w-[320px]">
      <div class="h-[58px] border border-[#a0a0a0] shadow-[1px_1px_0_#fff,inset_1px_1px_0_#fff] pl-[6px] pt-[5px]">
        <div class="grid grid-cols-[74px_73px_73px_74px] gap-x-[5px] gap-y-[4px]">
          <div class="h-[22px] flex items-center justify-center shadow-[inset_1px_1px_0_#fff,inset_-1px_-1px_0_#404040,inset_-2px_-2px_0_#808080]">轮廓</div>
          <div class="h-[22px] flex items-center justify-center shadow-[inset_1px_1px_0_#fff,inset_-1px_-1px_0_#404040,inset_-2px_-2px_0_#808080]">测试</div>
          <div class="h-[22px] flex items-center justify-center text-[#8a8a8a] shadow-[inset_1px_1px_0_#fff,inset_-1px_-1px_0_#404040,inset_-2px_-2px_0_#808080]">制图</div>
          <div class="h-[22px] flex items-center justify-center shadow-[inset_1px_1px_0_#fff,inset_-1px_-1px_0_#404040,inset_-2px_-2px_0_#808080]">抓取图像</div>
          <div class="h-[22px] flex items-center pl-[4px] font-bold text-[10px] tracking-[0.3px] shadow-[inset_1px_1px_0_#fff,inset_-1px_-1px_0_#404040,inset_-2px_-2px_0_#808080]">
            <svg class="w-[16px] h-[15px]" viewBox="0 0 16 15"><path d="M8 0 10.500 3H9V6.500H13V5L16 7.500 13 10V8.500H9V12H10.500L8 15 5.500 12H7V8.500H3V10L0 7.500 3 5V6.500H7V3H5.500z" fill="#8a8a8a"/></svg>
            <span class="ml-[13px]">Move</span>
          </div>
          <div class="h-[22px] flex items-center justify-center shadow-[inset_1px_1px_0_#fff,inset_-1px_-1px_0_#404040,inset_-2px_-2px_0_#808080]">自动示教</div>
        </div>
      </div>
      <div class="flex justify-end mt-[11px] pr-[4px]">
        <div class="w-[12px] h-[12px] flex items-center justify-center font-bold text-[10px] shadow-[inset_1px_1px_0_#404040,inset_-1px_-1px_0_#fff,inset_2px_2px_0_#808080]">?</div>
      </div>
    </div>
  </div>
  <div class="flex justify-end pr-[3px] mt-[3px]">
    <div class="w-[13px] h-[13px] flex items-center justify-center font-bold text-[10px] shadow-[inset_1px_1px_0_#404040,inset_-1px_-1px_0_#fff,inset_2px_2px_0_#808080]">?</div>
  </div>
</div>

<div class="mt-[105px] h-px bg-[#404040]"></div>
</body>
</html>
